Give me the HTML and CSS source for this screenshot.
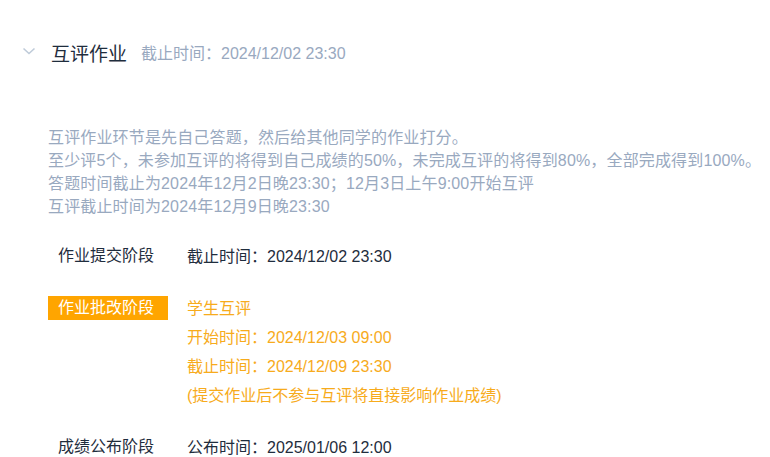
FILE: index.html
```html
<!DOCTYPE html>
<html lang="zh-CN">
<head>
<meta charset="utf-8">
<link rel="stylesheet" href="styles.css">
</head>
<body>
<div class="panel">
  <div class="header">
    <svg class="chevron" width="14" height="10" viewBox="0 0 14 10"><path d="M1.5 2.5 L7 7.5 L12.5 2.5" fill="none" stroke="#bfcbd9" stroke-width="1.6"/></svg>
    <span class="title">互评作业</span>
    <span class="subtitle">截止时间：2024/12/02 23:30</span>
  </div>
  <div class="content">
    <div class="desc">
      <p>互评作业环节是先自己答题，然后给其他同学的作业打分。</p>
      <p>至少评5个，未参加互评的将得到自己成绩的50%，未完成互评的将得到80%，全部完成得到100%。</p>
      <p>答题时间截止为2024年12月2日晚23:30；12月3日上午9:00开始互评</p>
      <p>互评截止时间为2024年12月9日晚23:30</p>
    </div>
    <div class="stages">
      <div class="stage">
        <div class="label">作业提交阶段</div>
        <div class="info">
          <div class="line">截止时间：2024/12/02 23:30</div>
        </div>
      </div>
      <div class="stage active">
        <div class="label">作业批改阶段</div>
        <div class="info">
          <div class="line">学生互评</div>
          <div class="line">开始时间：2024/12/03 09:00</div>
          <div class="line">截止时间：2024/12/09 23:30</div>
          <div class="line">(提交作业后不参与互评将直接影响作业成绩)</div>
        </div>
      </div>
      <div class="stage">
        <div class="label">成绩公布阶段</div>
        <div class="info">
          <div class="line">公布时间：2025/01/06 12:00</div>
        </div>
      </div>
    </div>
  </div>
</div>
</body>
</html>
```
FILE: styles.css
```css
html, body {
  margin: 0;
  padding: 0;
  background: #ffffff;
}
body {
  font-family: "Liberation Sans", "Noto Sans CJK SC", sans-serif;
  font-size: 16px;
  color: #1f2d3d;
  overflow: hidden;
}
.panel {
  padding-top: 38px;
}
.header {
  display: flex;
  align-items: center;
  height: 28px;
  padding-left: 22px;
}
.chevron {
  display: block;
  margin-right: 15px;
  margin-top: -2px;
}
.title {
  font-size: 19px;
  color: #1f2d3d;
  margin-right: 14px;
}
.subtitle {
  font-size: 16px;
  color: #99a9bf;
}
.content {
  padding-left: 48px;
  padding-top: 60px;
}
.desc {
  color: #99a9bf;
  line-height: 23px;
  letter-spacing: 0.15px;
}
.desc p {
  margin: 0;
}
.stages {
  margin-top: 24px;
  display: flex;
  flex-direction: column;
  gap: 23px;
}
.stage {
  display: flex;
  align-items: flex-start;
}
.label {
  width: 120px;
  box-sizing: border-box;
  padding: 0 10px;
  height: 24px;
  line-height: 24px;
  margin-top: 2px;
  margin-right: 19px;
  color: #1f2d3d;
  white-space: nowrap;
}
.info {
  color: #1f2d3d;
}
.line {
  line-height: 29px;
  height: 29px;
}
.stage.active .label {
  background: #ffa500;
  color: #ffffff;
}
.stage.active .info {
  color: #f7ab1c;
}
```
